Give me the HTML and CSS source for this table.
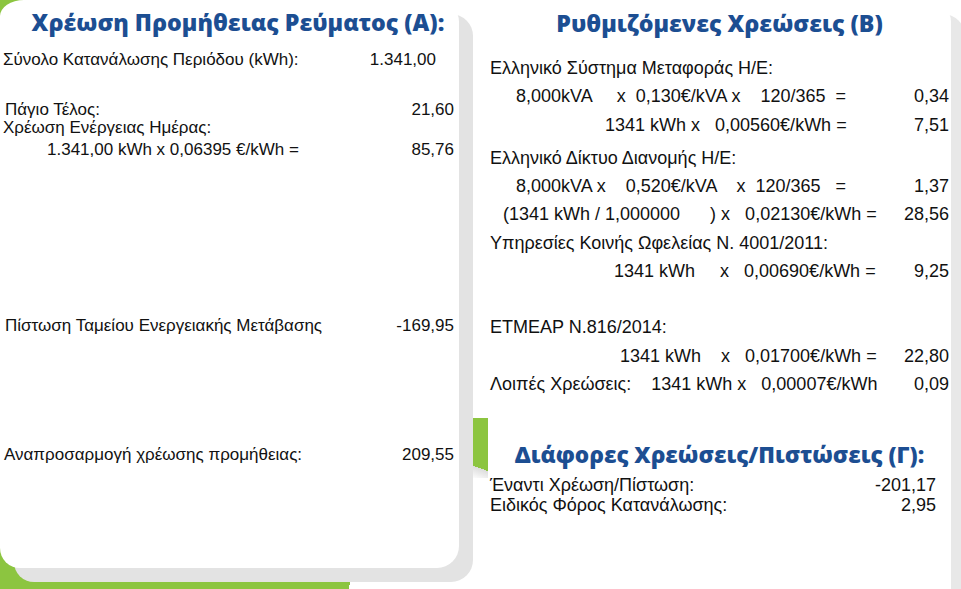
FILE: index.html
```html
<!DOCTYPE html>
<html lang="el">
<head>
<meta charset="utf-8">
<title>Χρεώσεις</title>
<link rel="stylesheet" href="styles.css">
</head>
<body>
<div class="page">
  <section class="card card-a">
    <h2 class="title title-a">Χρέωση Προμήθειας Ρεύματος (Α):</h2>
    <div class="line total"><span>Σύνολο Κατανάλωσης Περιόδου (kWh):</span><span class="val">1.341,00</span></div>
    <div class="line fee"><span>Πάγιο Τέλος:</span><span class="val">21,60</span></div>
    <div class="line"><span>Χρέωση Ενέργειας Ημέρας:</span></div>
    <div class="line energy"><span>1.341,00 kWh x 0,06395 €/kWh =</span><span class="val">85,76</span></div>
    <div class="line credit"><span>Πίστωση Ταμείου Ενεργειακής Μετάβασης</span><span class="val">-169,95</span></div>
    <div class="line adjust"><span>Αναπροσαρμογή χρέωσης προμήθειας:</span><span class="val">209,55</span></div>
  </section>

  <section class="card card-b">
    <h2 class="title">Ρυθμιζόμενες Χρεώσεις (Β)</h2>
    <div class="row first"><span>Ελληνικό Σύστημα Μεταφοράς Η/Ε:</span></div>
    <div class="row ind-a"><span>8,000kVA     x  0,130€/kVA x    120/365  =</span><span class="val">0,34</span></div>
    <div class="row ind-b"><span>1341 kWh x   0,00560€/kWh =</span><span class="val">7,51</span></div>
    <div class="row group"><span>Ελληνικό Δίκτυο Διανομής Η/Ε:</span></div>
    <div class="row ind-a"><span>8,000kVA x    0,520€/kVA    x  120/365   =</span><span class="val">1,37</span></div>
    <div class="row ind-c"><span>(1341 kWh / 1,000000      ) x   0,02130€/kWh =</span><span class="val">28,56</span></div>
    <div class="row"><span>Υπηρεσίες Κοινής Ωφελείας Ν. 4001/2011:</span></div>
    <div class="row ind-d"><span>1341 kWh     x   0,00690€/kWh =</span><span class="val">9,25</span></div>
    <div class="row gap-row"><span>ΕΤΜΕΑΡ Ν.816/2014:</span></div>
    <div class="row ind-e"><span>1341 kWh    x   0,01700€/kWh =</span><span class="val">22,80</span></div>
    <div class="row"><span>Λοιπές Χρεώσεις:    1341 kWh x   0,00007€/kWh</span><span class="val">0,09</span></div>

    <h2 class="title title-c">Διάφορες Χρεώσεις/Πιστώσεις (Γ):</h2>
    <div class="misc"><span>Έναντι Χρέωση/Πίστωση:</span><span class="val">-201,17</span></div>
    <div class="misc"><span>Ειδικός Φόρος Κατανάλωσης:</span><span class="val">2,95</span></div>
  </section>
</div>
</body>
</html>
```

FILE: styles.css
```css
* {
  box-sizing: border-box;
  margin: 0;
  padding: 0;
}

html,
body {
  width: 961px;
  height: 589px;
  overflow: hidden;
}

body {
  font-family: "Liberation Sans", Arial, sans-serif;
  font-size: 17px;
  color: #111;
  background: #fff;
}

.page {
  width: 961px;
  height: 589px;
  overflow: hidden;
  display: grid;
  grid-template-columns: 459px 29px 463px;
  align-items: start;
  background:
    linear-gradient(#8cc540, #8cc540) 0 0 / 30px 20px no-repeat,
    linear-gradient(200deg, #8cc540 0 80%, #dcdcdc 80%, #fff 100%) 470px 418px / 20px 60px no-repeat,
    linear-gradient(100deg, #8cc540 0 92%, transparent 92%) 0 535px / 380px 54px no-repeat,
    #fff;
}

.card {
  background: #fff;
}

.card-a {
  grid-column: 1;
  height: 568px;
  border-radius: 24px 22px 22px 20px / 16px 22px 22px 20px;
  box-shadow: 14px 14px 0 #e3e3e3;
  padding: 7px 5px 0 3px;
}

.card-b {
  grid-column: 3;
  height: 640px;
  font-size: 18px;
  border-radius: 0 22px 0 0;
  box-shadow: 14px 14px 0 #e8e8e8;
  padding: 8px 2px 0 2px;
}

.title {
  font-family: "Open Sans", "Noto Sans", sans-serif;
  font-weight: 800;
  font-size: 23.2px;
  line-height: 30px;
  color: #1c4e92;
  text-align: center;
}

.title-a {
  padding-left: 19px;
}

.line {
  display: flex;
  justify-content: space-between;
  line-height: 18px;
  white-space: pre;
}

.total {
  margin-top: 14px;
  padding-right: 18px;
}

.fee {
  margin-top: 32px;
  padding-left: 2px;
}

.energy {
  margin-top: 4px;
  padding-left: 44px;
}

.credit {
  margin-top: 158px;
  padding-left: 2px;
}

.adjust {
  margin-top: 111px;
  padding-left: 1px;
}

.row {
  display: flex;
  justify-content: space-between;
  line-height: 28.3px;
  white-space: pre;
}

.first {
  margin-top: 16px;
}

.group {
  margin-top: 5px;
}

.gap-row {
  margin-top: 28px;
}

.ind-a {
  padding-left: 26px;
}

.ind-b {
  padding-left: 115px;
}

.ind-c {
  padding-left: 13px;
}

.ind-d {
  padding-left: 124px;
}

.ind-e {
  padding-left: 130px;
}

.title-c {
  margin-top: 42px;
  font-size: 22.6px;
}

.misc {
  display: flex;
  justify-content: space-between;
  line-height: 20px;
  padding-right: 13px;
}

.title-c + .misc {
  margin-top: 5px;
}
```
